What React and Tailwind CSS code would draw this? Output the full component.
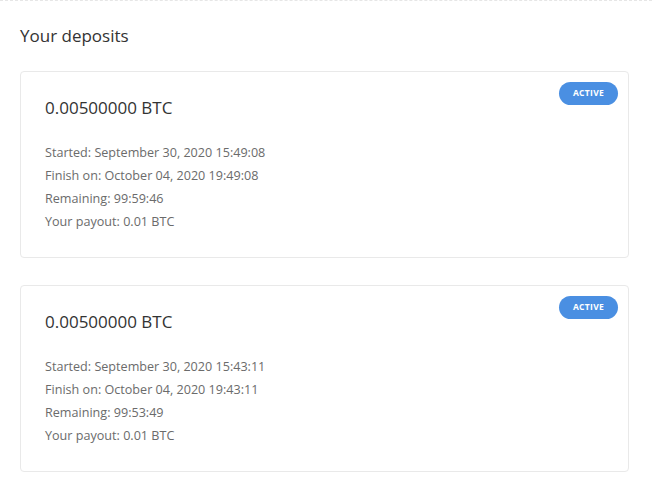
import React from "react";

const deposits = [
  {
    amount: "0.00500000 BTC",
    started: "September 30, 2020 15:49:08",
    finish: "October 04, 2020 19:49:08",
    remaining: "99:59:46",
    payout: "0.01 BTC",
  },
  {
    amount: "0.00500000 BTC",
    started: "September 30, 2020 15:43:11",
    finish: "October 04, 2020 19:43:11",
    remaining: "99:53:49",
    payout: "0.01 BTC",
  },
];

function DepositCard({ d }) {
  return (
    <div className="relative rounded border border-[#e9e9e9] bg-white px-[24px] pt-[24px] pb-[24px]">
      <span className="absolute right-[10px] top-[10px] flex h-[23px] w-[59px] items-center justify-center rounded-full bg-[#4a8fe2] text-[8.5px] font-bold tracking-[0.3px] text-white">
        ACTIVE
      </span>
      <div className="text-[17px] leading-[24px] text-[#333]">{d.amount}</div>
      <div className="mt-[21px] text-[12.6px] leading-[23px] text-[#6b6b6b]">
        <p>Started: {d.started}</p>
        <p>Finish on: {d.finish}</p>
        <p>Remaining: {d.remaining}</p>
        <p>Your payout: {d.payout}</p>
      </div>
    </div>
  );
}

export default function App() {
  return (
    <div
      className="min-h-[497px] w-[652px] border-t border-dashed border-[#e6e6e6] bg-white px-[20px] pt-[23px] pb-[25px]"
      style={{ fontFamily: '"Open Sans", sans-serif' }}
    >
      <h2 className="text-[17px] leading-[24px] text-[#333]">Your deposits</h2>
      <div className="mt-[23px] mr-[3px] flex flex-col gap-[27px]">
        {deposits.map((d, i) => (
          <DepositCard key={i} d={d} />
        ))}
      </div>
    </div>
  );
}
